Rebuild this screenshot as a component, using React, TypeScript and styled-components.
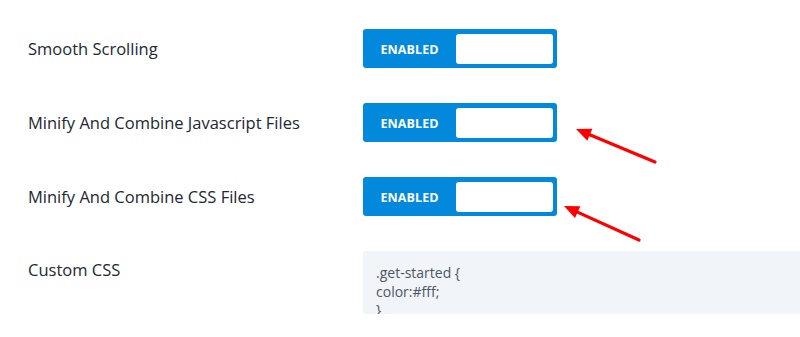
import React from "react";
import styled, { createGlobalStyle } from "styled-components";

const Global = createGlobalStyle`
  html, body { margin: 0; padding: 0; background: #ffffff; }
  body { font-family: "Open Sans", "Noto Sans", sans-serif; overflow: hidden; }
`;

const Page = styled.div`
  position: relative;
  width: 800px;
  height: 337px;
  box-sizing: border-box;
  padding: 29px 0 0 28px;
  display: flex;
  flex-direction: column;
  gap: 35px;
  overflow: hidden;
`;

const Row = styled.div<{ $top?: boolean }>`
  display: flex;
  align-items: ${(p) => (p.$top ? "flex-start" : "center")};
`;

const Label = styled.div<{ $offset?: number }>`
  width: 335px;
  flex: none;
  font-size: 16.5px;
  font-weight: 500;
  line-height: 24px;
  color: #232633;
  padding-top: ${(p) => p.$offset ?? 0}px;
`;

const Toggle = styled.div`
  width: 194px;
  height: 39px;
  box-sizing: border-box;
  background: #0389db;
  border-radius: 3px;
  display: flex;
  align-items: center;
  padding: 5px 4px 4px 0;
`;

const ToggleText = styled.span`
  width: 93px;
  text-align: center;
  color: #ffffff;
  font-size: 12.5px;
  font-weight: 700;
  letter-spacing: 0.1px;
`;

const Knob = styled.div`
  width: 97px;
  height: 30px;
  background: #ffffff;
  border-radius: 3px;
`;

const CodeBox = styled.div`
  flex: 1;
  height: 63px;
  box-sizing: border-box;
  background: #f1f4f9;
  border-radius: 3px 0 0 3px;
  padding: 13px 13px 0;
  overflow: hidden;
  font-size: 14px;
  line-height: 18.5px;
  color: #4e5663;
  white-space: pre;
`;

const Arrows = styled.svg`
  position: absolute;
  left: 0;
  top: 0;
  pointer-events: none;
`;

function Arrow({ x1, y1, x2, y2 }: { x1: number; y1: number; x2: number; y2: number }) {
  const dx = x2 - x1;
  const dy = y2 - y1;
  const len = Math.hypot(dx, dy);
  const ux = dx / len;
  const uy = dy / len;
  const hl = 15;
  const hw = 6.5;
  const bx = x2 - ux * hl;
  const by = y2 - uy * hl;
  const px = -uy;
  const py = ux;
  return (
    <g>
      <line x1={x1} y1={y1} x2={bx + ux * 2} y2={by + uy * 2} stroke="#ff0000" strokeWidth={3.2} strokeLinecap="round" />
      <polygon
        points={`${x2},${y2} ${bx + px * hw},${by + py * hw} ${bx - px * hw},${by - py * hw}`}
        fill="#ff0000"
      />
    </g>
  );
}

const settings = [
  "Smooth Scrolling",
  "Minify And Combine Javascript Files",
  "Minify And Combine CSS Files",
];

export default function App() {
  return (
    <>
      <Global />
      <Page>
        {settings.map((s) => (
          <Row key={s}>
            <Label>{s}</Label>
            <Toggle>
              <ToggleText>ENABLED</ToggleText>
              <Knob />
            </Toggle>
          </Row>
        ))}
        <Row $top>
          <Label $offset={7}>Custom CSS</Label>
          <CodeBox>{".get-started {\ncolor:#fff;\n}"}</CodeBox>
        </Row>
        <Arrows width={800} height={337}>
          <Arrow x1={655} y1={162} x2={576} y2={129} />
          <Arrow x1={639} y1={240} x2={564} y2={206} />
        </Arrows>
      </Page>
    </>
  );
}
